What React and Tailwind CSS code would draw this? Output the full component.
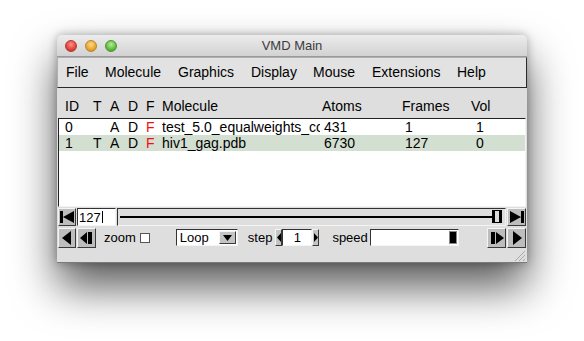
import React from "react";

const font = { fontFamily: "'Liberation Sans', Arial, sans-serif" };

const raised =
  "border border-t-[#f4f4f4] border-l-[#f4f4f4] border-r-[#3a3a3a] border-b-[#3a3a3a]";
const sunken =
  "border border-t-[#6a6a6a] border-l-[#6a6a6a] border-r-[#f4f4f4] border-b-[#f4f4f4]";

function Btn({ children, className = "" }) {
  return (
    <div className={`flex items-center justify-center bg-[#bdbdbd] ${raised} ${className}`}>
      {children}
    </div>
  );
}

const Ico = ({ d, w = 16, h = 16 }) => (
  <svg width={w} height={h} viewBox="0 0 16 16">
    <path d={d} fill="#000" />
  </svg>
);

const columns = [
  { key: "id", w: "w-[28px]" },
  { key: "t", w: "w-[17px]" },
  { key: "a", w: "w-[18px]" },
  { key: "d", w: "w-[18px]" },
  { key: "f", w: "w-[16px]" },
  { key: "mol", w: "w-[158px]" },
  { key: "atoms", w: "w-[81px] pl-[4px]" },
  { key: "frames", w: "w-[70px] pl-[4px]" },
  { key: "vol", w: "w-[40px] pl-[5px]" },
];

const rows = [
  { id: "0", t: "", a: "A", d: "D", f: "F", mol: "test_5.0_equalweights_conf.pdb", atoms: "431", frames: "1", vol: "1" },
  { id: "1", t: "T", a: "A", d: "D", f: "F", mol: "hiv1_gag.pdb", atoms: "6730", frames: "127", vol: "0", sel: true },
];

export default function App() {
  const menus = [
    ["File", "w-[39px]"],
    ["Molecule", "w-[73px]"],
    ["Graphics", "w-[73px]"],
    ["Display", "w-[62px]"],
    ["Mouse", "w-[59px]"],
    ["Extensions", "w-[85px]"],
    ["Help", "w-[40px]"],
  ];

  return (
    <div style={font} className="w-[584px] h-[341px] bg-white pt-[35px] pl-[57px] text-[14px] text-black">
      <div className="w-[470px] h-[228px] flex flex-col rounded-t-[5px] bg-[#dedede] border-b border-[#7a7a7a] shadow-[0_24px_44px_rgba(0,0,0,0.65),0_0_10px_rgba(0,0,0,0.3)]">
        {/* title bar */}
        <div className="relative h-[22px] shrink-0 flex items-center justify-center rounded-t-[5px] bg-gradient-to-b from-[#ececec] to-[#d2d2d2] border-b border-[#9a9a9a]">
          <div className="absolute left-[8px] top-[5px] flex gap-[8px]">
            <span className="w-[12px] h-[12px] rounded-full bg-[radial-gradient(circle_at_50%_35%,#ff8f85,#e0443b_60%,#b52a22)] border border-[#b03a32]" />
            <span className="w-[12px] h-[12px] rounded-full bg-[radial-gradient(circle_at_50%_35%,#ffd98a,#e8a72f_60%,#b97d14)] border border-[#b9862e]" />
            <span className="w-[12px] h-[12px] rounded-full bg-[radial-gradient(circle_at_50%_35%,#b6ec9a,#5fbe3d_60%,#3c8f22)] border border-[#4e9436]" />
          </div>
          <span className="text-[13px] text-[#3c3c3c]">VMD Main</span>
        </div>

        {/* menu bar */}
        <div className="h-[31px] shrink-0 flex items-center pl-[8px] bg-[#e2e2e2] border border-t-[#b0b0b0] border-l-[#b0b0b0] border-r-[#2a2a2a] border-b-[#2a2a2a]">
          {menus.map(([m, w]) => (
            <span key={m} className={`${w} shrink-0`}>{m}</span>
          ))}
        </div>

        {/* header */}
        <div className="h-[30px] shrink-0 flex items-end pb-[1px] pl-[8px]">
          <span className="w-[28px]">ID</span>
          <span className="w-[17px]">T</span>
          <span className="w-[18px]">A</span>
          <span className="w-[18px]">D</span>
          <span className="w-[16px]">F</span>
          <span className="w-[160px]">Molecule</span>
          <span className="w-[80px]">Atoms</span>
          <span className="w-[69px]">Frames</span>
          <span className="w-[40px]">Vol</span>
        </div>

        {/* list */}
        <div className={`h-[89px] shrink-0 mx-[1px] bg-white ${sunken} border-t-[#222] border-l-[#222] flex flex-col`}>
          {rows.map((r) => (
            <div key={r.id} className={`h-[16px] flex items-center pl-[6px] leading-[16px] ${r.sel ? "bg-[#d3dfd1]" : ""}`}>
              {columns.map((c) => (
                <span
                  key={c.key}
                  className={`${c.w} h-[16px] shrink-0 overflow-hidden whitespace-nowrap ${c.key === "f" ? "text-[#f01010]" : ""}`}
                >
                  {r[c.key]}
                </span>
              ))}
            </div>
          ))}
        </div>

        {/* frame slider row */}
        <div className="h-[18px] shrink-0 flex items-stretch mx-[1px] mt-[1px] gap-[1px]">
          <Btn className="w-[18px]">
            <Ico d="M1 2h3v12H1zM4 8l11-6v12z" />
          </Btn>
          <div className={`w-[39px] bg-white ${sunken} border-t-[#333] border-l-[#333] text-[13px] leading-none flex items-center pl-[1px]`}>
            127<span className="w-[1px] h-[12px] bg-black ml-[1px]" />
          </div>
          <div className={`flex-1 relative flex items-center ${sunken} border-t-[#333] border-l-[#333]`}>
            <div className="ml-[2px] w-[376px] h-[2px] bg-black" />
            <div className="absolute right-[3px] top-[1px] w-[10px] h-[13px] bg-black p-[1px]">
              <div className="w-full h-full bg-[#dcdcdc] border-l-[2px] border-r-[2px] border-black" />
            </div>
          </div>
          <Btn className="w-[19px]">
            <Ico d="M1 2l11 6-11 6zM12 2h3v12h-3z" />
          </Btn>
        </div>

        {/* controls row */}
        <div className="h-[21px] shrink-0 flex items-center mx-[1px] mt-[1px] text-[13px]">
          <Btn className="w-[18px] h-[20px]">
            <Ico d="M3 8l9-7v14z" />
          </Btn>
          <Btn className="w-[19px] h-[20px] ml-[1px]">
            <Ico d="M1 8l7-6v12zM9 2h4v12H9z" />
          </Btn>
          <span className="ml-[8px]">zoom</span>
          <span className="ml-[4px] w-[10px] h-[10px] bg-white border border-[#555]" />
          <div className={`ml-[26px] w-[62px] h-[17px] flex items-center bg-white ${sunken} border-t-[#333] border-l-[#333]`}>
            <span className="flex-1 pl-[3px]">Loop</span>
            <div className={`w-[17px] h-[13px] mr-[1px] bg-[#c4c4c4] ${raised} flex items-center justify-center`}>
              <svg width="9" height="6" viewBox="0 0 9 6"><path d="M0 0h9L4.5 6z" fill="#000" /></svg>
            </div>
          </div>
          <span className="ml-[10px]">step</span>
          <div className={`ml-[3px] w-[7px] h-[17px] bg-[#c4c4c4] ${raised} flex items-center justify-center`}>
            <svg width="4" height="9" viewBox="0 0 4 9"><path d="M4 0v9L0 4.5z" fill="#000" /></svg>
          </div>
          <div className={`w-[30px] h-[17px] bg-white ${sunken} border-t-[#333] border-l-[#333] flex items-center justify-center`}>1</div>
          <div className={`w-[7px] h-[17px] bg-[#c4c4c4] ${raised} flex items-center justify-center`}>
            <svg width="4" height="9" viewBox="0 0 4 9"><path d="M0 0v9l4-4.5z" fill="#000" /></svg>
          </div>
          <span className="ml-[13px]">speed</span>
          <div className={`ml-[2px] w-[89px] h-[17px] relative bg-white ${sunken} border-t-[#333] border-l-[#333]`}>
            <div className="absolute right-[1px] top-[1px] w-[8px] h-[13px] bg-black border border-[#888]" />
          </div>
          <div className="flex-1" />
          <Btn className="w-[19px] h-[20px]">
            <Ico d="M2 2h4v12H2zM7 2l8 6-8 6z" />
          </Btn>
          <Btn className="w-[19px] h-[20px] ml-[1px]">
            <Ico d="M4 1l9 7-9 7z" />
          </Btn>
        </div>

        {/* footer */}
        <div className="flex-1 flex justify-end items-end">
          <svg width="14" height="14" viewBox="0 0 14 14" className="mb-[1px] mr-[1px]">
            <path d="M13 3L3 13M13 7L7 13M13 11L11 13" stroke="#a8a8a8" strokeWidth="1" />
          </svg>
        </div>
      </div>
    </div>
  );
}
